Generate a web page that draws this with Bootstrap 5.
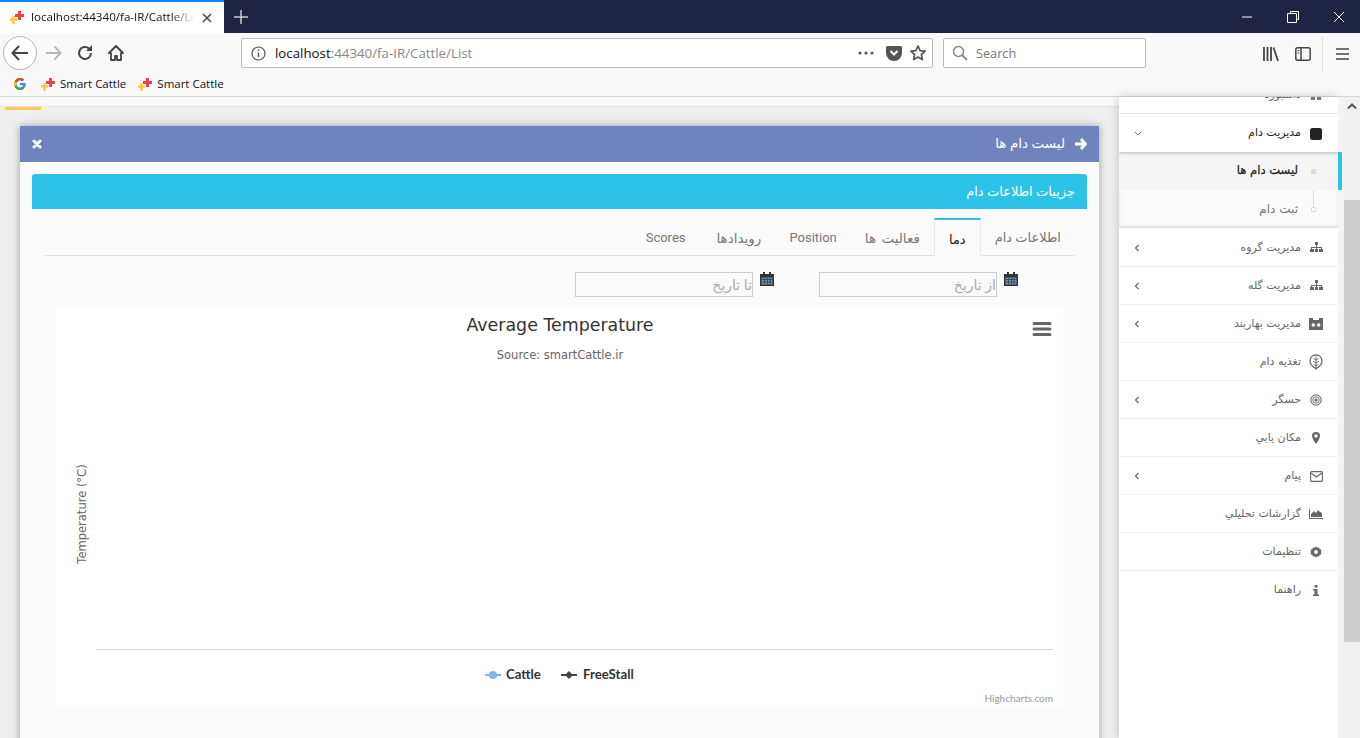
<!DOCTYPE html>
<html lang="fa">
<head>
  <meta charset="UTF-8">
  <title>Smart Cattle</title>
  <link href="https://cdn.jsdelivr.net/npm/bootstrap@5.3.3/dist/css/bootstrap.min.css" rel="stylesheet">
  <style>
    html, body { height: 738px; overflow: hidden; }
    body { font-family: "Open Sans", "DejaVu Sans", sans-serif; background: #eee; }
    .ff-tabs { height: 33px; background: #1f2344; color: #ddd; }
    .ff-tab { width: 224px; height: 33px; background: #fff; border-top: 2px solid #0a84ff; padding: 0 12px 0 10px; font-size: 11.6px; color: #111; gap: 7px; }
    .ff-tab-title { flex: 1; overflow: hidden; white-space: nowrap; margin-top: -1px; -webkit-mask-image: linear-gradient(to left, transparent, #000 24px); mask-image: linear-gradient(to left, transparent, #000 24px); }
    .ff-newtab { margin-left: 10px; }
    .ff-win { margin-left: auto; gap: 34px; padding-right: 15px; }
    .ff-bar { height: 37px; background: #f9f9fa; }
    .ff-back { width: 34px; height: 34px; border: 1px solid #b4b4b4; border-radius: 50%; background: #fff; margin: 3px 0 0 3px; }
    .ff-ico { margin: 12px 0 0 15px; }
    .ff-url { width: 692px; height: 30px; margin: 5px 0 0 117px; background: #fff; border: 1px solid #bcbcbc; border-radius: 2px; padding: 0 6px 0 9px; font-size: 13.3px; color: #888; }
    .ff-url b { font-weight: 400; color: #111; }
    .ff-url-text { margin: 2px 0 0 9px; flex: 1; }
    .ff-search { width: 203px; height: 30px; margin: 5px 0 0 10px; background: #fff; border: 1px solid #bcbcbc; border-radius: 2px; padding-left: 8px; font-size: 12.7px; color: #777; gap: 8px; }
    .ff-search span { margin-top: 2px; }
    .ff-right { margin-left: auto; padding-right: 11px; }
    .ff-sep { width: 1px; height: 34px; background: #ddd; margin: 0 13px 0 11px; }
    .ff-marks { height: 27px; background: #f9f9fa; border-bottom: 1px solid #d8d8d8; font-size: 11.5px; color: #111; padding: 2px 0 0 14px; }
    .ff-mark { gap: 5px; margin-right: 12px; }
    .ff-mark-first { margin-right: 15px; }

    .page-wrap { height: 641px; }
    .main-col { width: 1119px; background: #efefef; }
    .top-strip { height: 10px; background: #f8f8f8; border-bottom: 1px solid #e4e4e4; }
    .strip-mark { width: 36px; height: 3px; margin-left: 5px; background: #ffce55; }
    .list-panel { margin: 16px 20px 0; border: 0; border-radius: 0; background: #fbfbfb; box-shadow: 0 0 8px rgba(0,0,0,.35); height: 700px; }
    .list-head { height: 36px; background: #6f84bf; color: #fff; padding: 0 12px; font-size: 13.5px; border-radius: 0; }
    .list-head span { margin-right: 10px; margin-top: -2px; }
    .info-bar { height: 35px; margin: 12px 12px 0; background: #2dc3e8; color: #fff; font-size: 13px; padding: 0 12px; border-radius: 3px 3px 0 0; }
    .tab-row { margin: 9px 24px 0; border-bottom: 1px solid #e2e2e2; padding: 0; height: 38px; }
    .tab-row .nav-link { height: 37px; padding: 10px 14px 0; border: 0; border-radius: 0; color: #777; font-size: 13px; font-family: Roboto, "DejaVu Sans", sans-serif; background: transparent; margin: 0; }
    .tab-row .nav-link.active { border-top: 2px solid #2dc3e8; border-left: 1px solid #e8e8e8; border-right: 1px solid #e8e8e8; border-bottom: 1px solid #fbfbfb; height: 38px; padding-top: 10px; color: #222; background: #fbfbfb; }
    .tab-row .nav-link.tab-big { font-size: 13.5px; word-spacing: 2px; }
    .tab-row .nav-link.tab-extra { padding-left: 17px; }
    .date-row { padding: 16px 57px 0 0; height: 51px; margin-right: 24px; }
    .date-row svg { margin-left: 7px; }
    .date-input { width: 178px; height: 25px; border: 1px solid #ccc; border-radius: 0; background: transparent; padding: 0; font-size: 14px; box-shadow: none; margin-left: 45px; }
    .date-input::placeholder { color: #aaa; }
    .chart-box { margin: 0 36px; height: 400px; background: #fff; }
    .chart-box svg { display: block; }
    .chart-title { font-family: "DejaVu Sans", sans-serif; font-size: 17.4px; fill: #333; }
    .chart-sub { font-family: "DejaVu Sans", sans-serif; font-size: 11.5px; fill: #666; }
    .chart-axis { font-family: "DejaVu Sans", sans-serif; font-size: 11.5px; fill: #666; }
    .chart-legend { font-family: "Lato", sans-serif; font-size: 13.2px; font-weight: 700; fill: #333; }
    .chart-credit { font-family: "Lato", sans-serif; font-size: 10px; fill: #999; }

    .side-col { width: 219px; background: #fff; box-shadow: 0 0 10px rgba(0,0,0,.2); overflow: hidden; }
    .side-list { margin-top: -21px; border-radius: 0; }
    .side-item { height: 38px; padding: 1px 14px 0; border-color: #f0f0f0; color: #666; font-size: 11px; gap: 7px; font-family: "DejaVu Sans", sans-serif; }
    .side-item.open-item { color: #222; box-shadow: 0 1px 3px rgba(0,0,0,.25); position: relative; z-index: 1; border-bottom: 0; }
    .side-ico { width: 16px; display: flex; justify-content: center; }
    .side-chev { margin-right: auto; margin-left: 1px; }
    .side-sub { position: relative; background: #fbfbfb; box-shadow: inset 0 -2px 3px rgba(0,0,0,.12); margin-bottom: 1px; }
    .side-sub::before { content: ""; position: absolute; right: 24px; top: 0; height: 58px; width: 1px; background: #ddd; }
    .sub-item { height: 38px; padding-right: 40px; font-size: 12px; color: #777; font-family: "DejaVu Sans", sans-serif; position: relative; }
    .sub-item::before { content: ""; position: absolute; right: 22px; top: 17px; width: 5px; height: 5px; border: 1px solid #ddd; background: #fff; }
    .sub-item.now { background: #f5f5f5; color: #222; font-size: 11.6px; -webkit-text-stroke: .25px #222; }
    .sub-item.now::before { background: #ddd; }
    .gutter { width: 6px; background: #f4f4f4; }
    .gutter i { display: block; width: 4px; height: 38px; margin-top: 55px; background: #2dc3e8; }
    .scroll-col { width: 16px; background: #f1f1f1; }
    .scroll-up { height: 103px; padding-top: 6px; }
    .scroll-thumb { height: 442px; background: #cdcdcd; }
  </style>
</head>
<body>
  <div class="ff-tabs d-flex">
    <div class="ff-tab d-flex align-items-center">
      <svg width="14" height="13" viewBox="0 0 14 13"><path d="M2.300 5h2.400v2.300H7v2.400H4.700V13H2.300V9.700H0V7.300h2.300z" fill="#fcc84a"/><path d="M8 0h3v3h3v3h-3v3H8V6H5V3h3z" fill="#f0404a"/></svg>
      <span class="ff-tab-title">localhost:44340/fa-IR/Cattle/List</span>
      <svg width="10" height="10" viewBox="0 0 10 10"><path d="M1 1l8 8M9 1l-8 8" stroke="#444" stroke-width="1.500"/></svg>
    </div>
    <div class="ff-newtab d-flex align-items-center">
      <svg width="14" height="14" viewBox="0 0 14 14"><path d="M7 0v14M0 7h14" stroke="#ccc" stroke-width="1.500"/></svg>
    </div>
    <div class="ff-win d-flex align-items-center">
      <svg width="12" height="12" viewBox="0 0 12 12"><path d="M1 6h10" stroke="#fff"/></svg>
      <svg width="12" height="12" viewBox="0 0 12 12"><path d="M3.500 2.500V.5h8v8h-2M.5 2.500h9v9h-9z" fill="none" stroke="#fff"/></svg>
      <svg width="12" height="12" viewBox="0 0 12 12"><path d="M1 1l10 10M11 1L1 11" stroke="#fff"/></svg>
    </div>
  </div>

  <div class="ff-bar d-flex align-items-start">
    <div class="ff-back d-flex align-items-center justify-content-center">
      <svg width="18" height="16" viewBox="0 0 18 16"><path d="M8 1L1.500 8 8 15M2 8h15" fill="none" stroke="#444" stroke-width="2"/></svg>
    </div>
    <svg class="ff-ico ms-2" width="17" height="16" viewBox="0 0 18 16"><path d="M10 1l6.500 7L10 15M16 8H1" fill="none" stroke="#b5b5b5" stroke-width="2"/></svg>
    <svg class="ff-ico" width="16" height="16" viewBox="0 0 16 16"><path d="M14 8a6 6 0 1 1-2-4.500" fill="none" stroke="#444" stroke-width="2"/><path d="M15 0v6H9z" fill="#444"/></svg>
    <svg class="ff-ico" width="16" height="16" viewBox="0 0 16 16"><path d="M8 1L1 8h2v7h4v-4h2v4h4V8h2z" fill="none" stroke="#444" stroke-width="1.800" stroke-linejoin="round"/></svg>
    <div class="ff-url d-flex align-items-center">
      <svg width="15" height="15" viewBox="0 0 15 15"><circle cx="7.500" cy="7.500" r="6.500" fill="none" stroke="#555" stroke-width="1.200"/><path d="M7.500 6.500v4.500M7.500 3.500v1.500" stroke="#555" stroke-width="1.500"/></svg>
      <span class="ff-url-text"><b>localhost</b>:44340/fa-IR/Cattle/List</span>
      <svg width="16" height="4" viewBox="0 0 16 4"><circle cx="2" cy="2" r="1.600" fill="#555"/><circle cx="8" cy="2" r="1.600" fill="#555"/><circle cx="14" cy="2" r="1.600" fill="#555"/></svg>
      <svg class="ms-2 ps-1" width="20" height="15" viewBox="0 0 16 15"><path d="M1.500 0h13A1.500 1.500 0 0 1 16 1.500V7a8 8 0 0 1-16 0V1.500A1.500 1.500 0 0 1 1.500 0z" fill="#555"/><path d="M4.500 5L8 8.500 11.500 5" fill="none" stroke="#fff" stroke-width="2"/></svg>
      <svg class="ms-2" width="16" height="16" viewBox="0 0 16 16"><path d="M8 1l2.100 4.600 5 .6-3.700 3.400 1 5L8 12.100 3.600 14.600l1-5L.9 6.200l5-.6z" fill="none" stroke="#555" stroke-width="1.700" stroke-linejoin="round"/></svg>
    </div>
    <div class="ff-search d-flex align-items-center">
      <svg width="16" height="16" viewBox="0 0 16 16"><circle cx="6.500" cy="6.500" r="5" fill="none" stroke="#888" stroke-width="1.500"/><path d="M10 10l5 5" stroke="#888" stroke-width="1.800"/></svg>
      <span>Search</span>
    </div>
    <div class="ff-right d-flex align-items-center mt-1">
      <svg width="16" height="14" viewBox="0 0 16 14"><path d="M1 0v14M4.500 0v14M8 0v14M10.500 .5l4.500 13.500" stroke="#444" stroke-width="1.800" fill="none"/></svg>
      <svg class="ms-3" width="16" height="14" viewBox="0 0 16 14"><rect x=".8" y=".8" width="14.400" height="12.400" rx="2" fill="none" stroke="#444" stroke-width="1.500"/><path d="M6 1v12" stroke="#444" stroke-width="1.500"/><path d="M2.500 3.500h2M2.500 6h2" stroke="#444"/></svg>
      <div class="ff-sep"></div>
      <svg width="13" height="12" viewBox="0 0 13 12"><path d="M0 1h13M0 6h13M0 11h13" stroke="#444" stroke-width="1.600"/></svg>
    </div>
  </div>

  <div class="ff-marks d-flex align-items-center">
    <div class="ff-mark ff-mark-first d-flex align-items-center">
      <svg width="12" height="12" viewBox="0 0 24 24"><path d="M12 10v4.500h6.500c-.6 3-3.200 4.800-6.500 4.800a7.300 7.300 0 0 1 0-14.600c1.800 0 3.400.6 4.700 1.700l3.400-3.400A12 12 0 1 0 12 24c6.500 0 11.500-4.600 11.500-12 0-.7-.1-1.400-.2-2z" fill="#4285f4"/><path d="M1.400 6.400l4 3A7.300 7.300 0 0 1 12 4.700c1.800 0 3.400.6 4.700 1.700l3.400-3.400A12 12 0 0 0 1.400 6.400z" fill="#ea4335"/><path d="M1.300 17.400l4-3.100a7.300 7.300 0 0 1 0-4.900l-4-3a12 12 0 0 0 0 11z" fill="#fbbc05"/><path d="M12 24c3.200 0 5.900-1 7.900-2.900l-3.800-3A7.300 7.300 0 0 1 5.300 14.300l-4 3.100A12 12 0 0 0 12 24z" fill="#34a853"/></svg>
    </div>
    <div class="ff-mark d-flex align-items-center">
      <svg width="14" height="13" viewBox="0 0 14 13"><path d="M2.300 5h2.400v2.300H7v2.400H4.700V13H2.300V9.700H0V7.300h2.300z" fill="#fcc84a"/><path d="M8 0h3v3h3v3h-3v3H8V6H5V3h3z" fill="#f0404a"/></svg>
      <span>Smart Cattle</span>
    </div>
    <div class="ff-mark d-flex align-items-center">
      <svg width="14" height="13" viewBox="0 0 14 13"><path d="M2.300 5h2.400v2.300H7v2.400H4.700V13H2.300V9.700H0V7.300h2.300z" fill="#fcc84a"/><path d="M8 0h3v3h3v3h-3v3H8V6H5V3h3z" fill="#f0404a"/></svg>
      <span>Smart Cattle</span>
    </div>
  </div>

  <div class="page-wrap d-flex">
    <div class="main-col overflow-hidden">
      <div class="top-strip"></div>
      <div class="strip-mark"></div>
      <div class="card list-panel" dir="rtl">
        <div class="list-head d-flex align-items-center">
          <svg width="12" height="12" viewBox="0 0 12 12"><path d="M6 1l4.500 5L6 11M10 6H0" fill="none" stroke="#fff" stroke-width="3"/></svg>
          <span>لیست دام ها</span>
          <svg class="me-auto" width="10" height="10" viewBox="0 0 10 10"><path d="M2 2l6 6M8 2L2 8" stroke="#fff" stroke-width="3" stroke-linecap="round"/></svg>
        </div>
        <div class="info-bar d-flex align-items-center">جزییات اطلاعات دام</div>
        <ul class="nav nav-tabs tab-row">
          <li class="nav-item"><a class="nav-link" href="#">اطلاعات دام</a></li>
          <li class="nav-item"><a class="nav-link active" href="#">دما</a></li>
          <li class="nav-item"><a class="nav-link tab-big" href="#">فعالیت ها</a></li>
          <li class="nav-item"><a class="nav-link" href="#">Position</a></li>
          <li class="nav-item"><a class="nav-link tab-big tab-extra" href="#">رویدادها</a></li>
          <li class="nav-item"><a class="nav-link" href="#">Scores</a></li>
        </ul>
        <div class="date-row d-flex align-items-start">
          <svg width="14" height="14" viewBox="0 0 14 14"><path d="M0 2h14v12H0z" fill="#333"/><path d="M3 0h2v3H3zM9 0h2v3H9z" fill="#333"/><path d="M1.500 5.500h11v7h-11z" fill="#6f93bd"/><path d="M1.500 7.500h11M1.500 10h11M4.500 5.500v7M7.500 5.500v7M10 5.500v7" stroke="#333" stroke-width=".7"/></svg>
          <input class="form-control date-input" type="text" placeholder="از تاریخ">
          <svg width="14" height="14" viewBox="0 0 14 14"><path d="M0 2h14v12H0z" fill="#333"/><path d="M3 0h2v3H3zM9 0h2v3H9z" fill="#333"/><path d="M1.500 5.500h11v7h-11z" fill="#6f93bd"/><path d="M1.500 7.500h11M1.500 10h11M4.500 5.500v7M7.500 5.500v7M10 5.500v7" stroke="#333" stroke-width=".7"/></svg>
          <input class="form-control date-input" type="text" placeholder="تا تاریخ">
        </div>
        <div class="chart-box" dir="ltr">
          <svg width="1007" height="400" viewBox="0 0 1007 400">
            <text class="chart-title" x="504" y="24" text-anchor="middle">Average Temperature</text>
            <text class="chart-sub" x="504" y="52" text-anchor="middle">Source: smartCattle.ir</text>
            <path d="M978 16.500h16M978 22h16M978 27.500h16" stroke="#666" stroke-width="3" stroke-linecap="round"/>
            <text class="chart-axis" transform="translate(30 207) rotate(-90)" text-anchor="middle">Temperature (°C)</text>
            <path d="M40 342.500h957" stroke="#ccd6eb"/>
            <path d="M429 368h16" stroke="#7cb5ec" stroke-width="2"/><circle cx="437" cy="368" r="4" fill="#7cb5ec"/>
            <text class="chart-legend" x="450" y="372">Cattle</text>
            <path d="M505 368h16" stroke="#434348" stroke-width="2"/><path d="M513 364l4 4-4 4-4-4z" fill="#434348"/>
            <text class="chart-legend" x="527" y="372">FreeStall</text>
            <text class="chart-credit" x="997" y="395" text-anchor="end">Highcharts.com</text>
          </svg>
        </div>
      </div>
    </div>

    <div class="side-col" dir="rtl">
      <div class="list-group list-group-flush side-list">
        <a class="list-group-item side-item d-flex align-items-center" href="#">
          <span class="side-ico"><svg width="12" height="12" viewBox="0 0 12 12"><path d="M1 1h4v4H1zM7 1h4v4H7zM1 7h4v4H1zM7 7h4v4H7z" fill="#777"/></svg></span>داشبورد
        </a>
        <a class="list-group-item side-item open-item d-flex align-items-center" href="#">
          <span class="side-ico"><svg width="12" height="12" viewBox="0 0 12 12"><rect width="12" height="12" rx="2.500" fill="#222"/></svg></span>مدیریت دام
          <svg class="side-chev" width="8" height="6" viewBox="0 0 8 6"><path d="M1 1l3 3 3-3" fill="none" stroke="#777"/></svg>
        </a>
        <div class="side-sub">
          <div class="sub-item now d-flex align-items-center">لیست دام ها</div>
          <div class="sub-item d-flex align-items-center">ثبت دام</div>
        </div>
        <a class="list-group-item side-item d-flex align-items-center" href="#">
          <span class="side-ico"><svg width="13" height="12" viewBox="0 0 13 12"><path d="M5 0h3v3H5zM6 3h1v2h5v2h1v3H9V7h2V6H7v1h1v3H5V7h1V6H2v1h2v3H0V7h1V5h5z" fill="#666"/></svg></span>مدیریت گروه
          <svg class="side-chev" width="6" height="8" viewBox="0 0 6 8"><path d="M4.500 1l-3 3 3 3" fill="none" stroke="#666" stroke-width="1.200"/></svg>
        </a>
        <a class="list-group-item side-item d-flex align-items-center" href="#">
          <span class="side-ico"><svg width="13" height="12" viewBox="0 0 13 12"><path d="M5 0h3v3H5zM6 3h1v2h5v2h1v3H9V7h2V6H7v1h1v3H5V7h1V6H2v1h2v3H0V7h1V5h5z" fill="#666"/></svg></span>مدیریت گله
          <svg class="side-chev" width="6" height="8" viewBox="0 0 6 8"><path d="M4.500 1l-3 3 3 3" fill="none" stroke="#666" stroke-width="1.200"/></svg>
        </a>
        <a class="list-group-item side-item d-flex align-items-center" href="#">
          <span class="side-ico"><svg width="14" height="12" viewBox="0 0 14 12"><path d="M0 0h4v2h6V0h4v12H0z" fill="#666"/><circle cx="4.300" cy="7" r="1.800" fill="#fff"/><circle cx="9.700" cy="7" r="1.800" fill="#fff"/></svg></span>مدیریت بهاربند
          <svg class="side-chev" width="6" height="8" viewBox="0 0 6 8"><path d="M4.500 1l-3 3 3 3" fill="none" stroke="#666" stroke-width="1.200"/></svg>
        </a>
        <a class="list-group-item side-item d-flex align-items-center" href="#">
          <span class="side-ico"><svg width="14" height="16" viewBox="0 0 14 16"><path d="M7 1C3.500 1 1 3.500 1 7s3 6 6 7.500C10 13 13 10.500 13 7s-2.500-6-6-6z" fill="none" stroke="#666" stroke-width="1.300"/><path d="M7 2.500V16M7 6L4.500 4.500M7 6l2.500-1.500M7 9L4 7M7 9l3-2M7 12L4.500 10M7 12l2.500-2" stroke="#666" stroke-width=".9"/></svg></span>تغذیه دام
        </a>
        <a class="list-group-item side-item d-flex align-items-center" href="#">
          <span class="side-ico"><svg width="12" height="12" viewBox="0 0 12 12"><circle cx="6" cy="6" r="5.200" fill="none" stroke="#777" stroke-width="1.200"/><circle cx="6" cy="6" r="3.200" fill="none" stroke="#777"/><circle cx="6" cy="6" r="1.600" fill="#666"/></svg></span>حسگر
          <svg class="side-chev" width="6" height="8" viewBox="0 0 6 8"><path d="M4.500 1l-3 3 3 3" fill="none" stroke="#666" stroke-width="1.200"/></svg>
        </a>
        <a class="list-group-item side-item d-flex align-items-center" href="#">
          <span class="side-ico"><svg width="8" height="12" viewBox="0 0 8 12"><path d="M4 0a4 4 0 0 1 4 4c0 2.500-4 8-4 8S0 6.500 0 4a4 4 0 0 1 4-4z" fill="#666"/><circle cx="4" cy="4" r="1.700" fill="#fff"/></svg></span>مکان یابي
        </a>
        <a class="list-group-item side-item d-flex align-items-center" href="#">
          <span class="side-ico"><svg width="13" height="11" viewBox="0 0 13 11"><rect x=".6" y=".6" width="11.800" height="9.800" rx="1" fill="none" stroke="#666" stroke-width="1.100"/><path d="M1 2l5.500 4L12 2" fill="none" stroke="#666" stroke-width="1.100"/></svg></span>پیام
          <svg class="side-chev" width="6" height="8" viewBox="0 0 6 8"><path d="M4.500 1l-3 3 3 3" fill="none" stroke="#666" stroke-width="1.200"/></svg>
        </a>
        <a class="list-group-item side-item d-flex align-items-center" href="#">
          <span class="side-ico"><svg width="14" height="10" viewBox="0 0 14 10"><path d="M0 0h1v9h13v1H0z" fill="#666"/><path d="M2 8V5l3-3 2 2 2-3 2 2 2 1v4z" fill="#666"/></svg></span>گزارشات تحلیلي
        </a>
        <a class="list-group-item side-item d-flex align-items-center" href="#">
          <span class="side-ico"><svg width="12" height="12" viewBox="0 0 12 12"><path d="M6 0l1 1.800 2-.6.500 2 2 .5-.6 2L12 6l-1.100.3.600 2-2 .5-.5 2-2-.6L6 12l-1-1.800-2 .6-.5-2-2-.5.600-2L0 6l1.100-.7-.6-1.600 2-.5.500-2 2 .6z" fill="#666"/><circle cx="6" cy="6" r="2" fill="#fff"/></svg></span>تنظیمات
        </a>
        <a class="list-group-item side-item d-flex align-items-center" href="#">
          <span class="side-ico"><svg width="6" height="11" viewBox="0 0 6 11"><path d="M1.500 0h3v2.500h-3zM0 4h4.500v5.500H6V11H0V9.500h1.500v-4H0z" fill="#666"/></svg></span>راهنما
        </a>
      </div>
    </div>
    <div class="gutter"><i></i></div>
    <div class="scroll-col">
      <div class="scroll-up d-flex justify-content-center">
        <svg width="10" height="7" viewBox="0 0 10 7"><path d="M1 5.500l4-4 4 4" fill="none" stroke="#555" stroke-width="2"/></svg>
      </div>
      <div class="scroll-thumb"></div>
    </div>
  </div>
</body>
</html>
